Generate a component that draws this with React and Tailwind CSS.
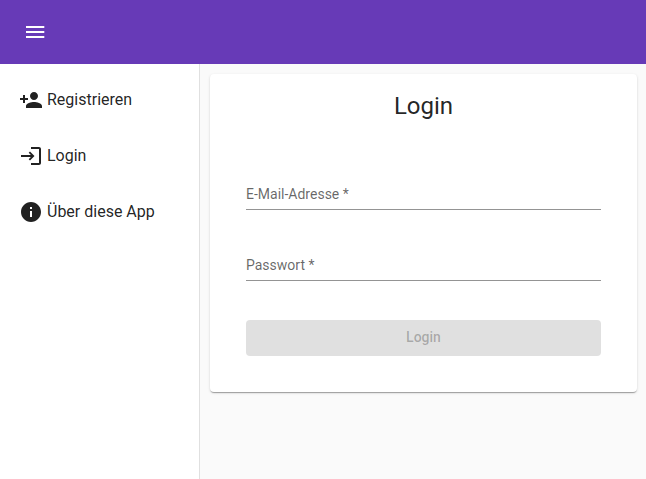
function Icon({ children, className = "" }) {
  return (
    <svg viewBox="0 0 24 24" fill="currentColor" className={"size-6 shrink-0 " + className}>
      {children}
    </svg>
  );
}

function NavItem({ label, children }) {
  return (
    <a className="flex h-14 items-center gap-1 px-[19px] text-[16px] leading-6 text-black/87">
      <Icon>{children}</Icon>
      <span>{label}</span>
    </a>
  );
}

function Field({ label }) {
  return (
    <label className="block border-b border-black/42 pb-[6px] text-[14px] leading-[18px] text-black/60">
      {label} *
    </label>
  );
}

export default function App() {
  return (
    <div className="flex h-[479px] w-[646px] flex-col overflow-hidden bg-[#fafafa] font-['Roboto',sans-serif]">
      <header className="flex h-16 shrink-0 items-center bg-[#673ab7] px-[23px] text-white">
        <Icon>
          <path d="M3 18h18.300v-2H3v2zm0-5h18.300v-2H3v2zm0-7v2h18.300V6H3z" />
        </Icon>
      </header>
      <div className="flex min-h-0 flex-1">
        <nav className="w-[200px] shrink-0 border-r border-black/12 bg-white pt-2">
          <NavItem label="Registrieren">
            <path d="M15 12c2.21 0 4-1.79 4-4s-1.79-4-4-4-4 1.79-4 4 1.79 4 4 4zm-9-2V7H4v3H1v2h3v3h2v-3h3v-2H6zm9 4c-2.67 0-8 1.34-8 4v2h16v-2c0-2.66-5.33-4-8-4z" />
          </NavItem>
          <NavItem label="Login">
            <path d="M11 7.500 9.700 8.800l2.200 2.200H2v2h9.900l-2.200 2.200L11 16.500l4.500-4.500L11 7.500zM20 19h-8v2h8c1.100 0 2-.9 2-2V5c0-1.100-.9-2-2-2h-8v2h8v14z" />
          </NavItem>
          <NavItem label="Über diese App">
            <path d="M12 2C6.480 2 2 6.480 2 12s4.480 10 10 10 10-4.480 10-10S17.520 2 12 2zm1 15h-2v-6h2v6zm0-8h-2V7h2v2z" />
          </NavItem>
        </nav>
        <main className="flex-1 pt-[10px] pr-[9px] pl-[10px]">
          <form className="flex h-[318px] flex-col rounded bg-white px-9 pt-4 shadow-[0_2px_1px_-1px_rgba(0,0,0,0.2),0_1px_1px_0_rgba(0,0,0,0.14),0_1px_3px_0_rgba(0,0,0,0.12)]">
            <h1 className="text-center text-[24px] leading-8 text-black/87">Login</h1>
            <div className="mt-[63px] flex flex-col gap-[46px]">
              <Field label="E-Mail-Adresse" />
              <Field label="Passwort" />
            </div>
            <button type="button" disabled className="mt-[39px] h-9 rounded bg-[#e0e0e0] pb-[2px] text-[14px] font-medium leading-[34px] text-black/26">
              Login
            </button>
          </form>
        </main>
      </div>
    </div>
  );
}
